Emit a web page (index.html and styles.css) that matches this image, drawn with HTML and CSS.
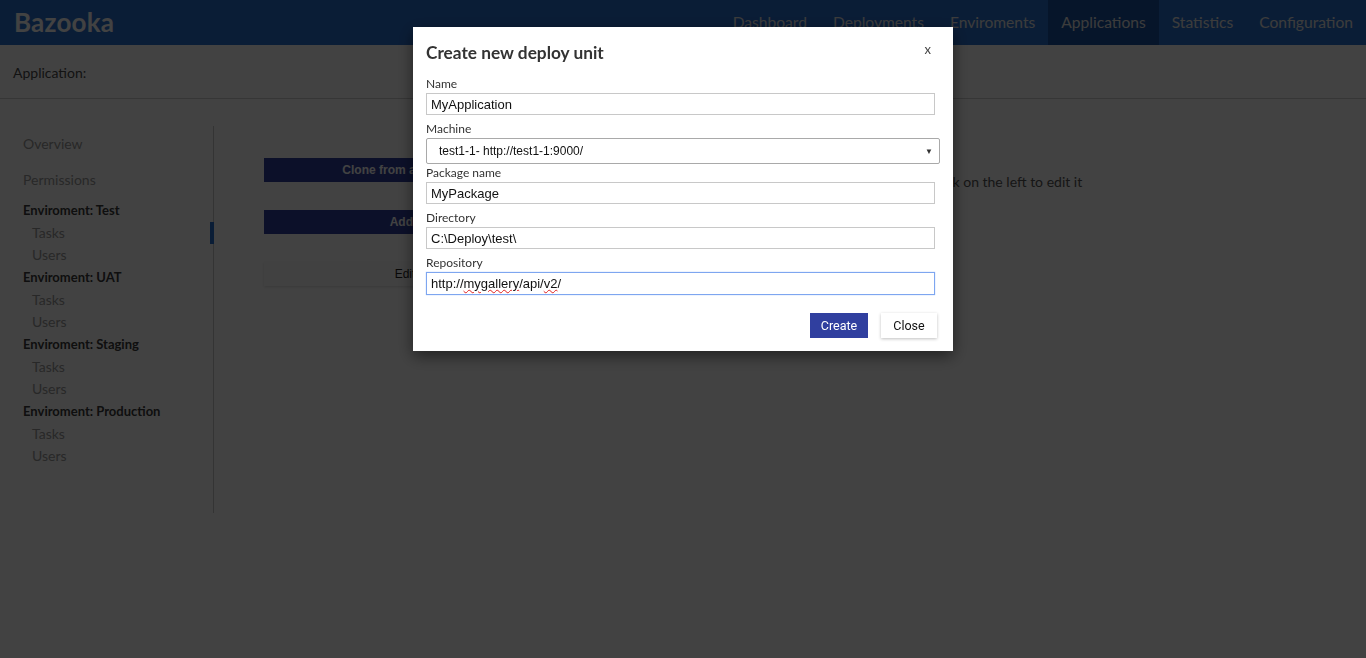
FILE: index.html
```html
<!DOCTYPE html>
<html>
<head>
<meta charset="utf-8">
<title>Bazooka</title>
<link rel="stylesheet" href="styles.css">
</head>
<body>
<header class="topbar">
  <div class="logo">Bazooka</div>
  <nav class="nav">
    <a class="nav-item">Dashboard</a>
    <a class="nav-item">Deployments</a>
    <a class="nav-item">Enviroments</a>
    <a class="nav-item active">Applications</a>
    <a class="nav-item">Statistics</a>
    <a class="nav-item">Configuration</a>
  </nav>
</header>
<div class="subbar">Application:</div>
<main class="page">
  <aside class="sidebar">
    <div class="side-link">Overview</div>
    <div class="side-link">Permissions</div>
    <div class="env">
      <div class="env-title">Enviroment: Test</div>
      <div class="env-link current">Tasks</div>
      <div class="env-link">Users</div>
    </div>
    <div class="env">
      <div class="env-title">Enviroment: UAT</div>
      <div class="env-link">Tasks</div>
      <div class="env-link">Users</div>
    </div>
    <div class="env">
      <div class="env-title">Enviroment: Staging</div>
      <div class="env-link">Tasks</div>
      <div class="env-link">Users</div>
    </div>
    <div class="env">
      <div class="env-title">Enviroment: Production</div>
      <div class="env-link">Tasks</div>
      <div class="env-link">Users</div>
    </div>
  </aside>
  <section class="content">
    <div class="actions">
      <button class="btn-primary wide clone">Clone from another application</button>
      <button class="btn-primary wide add">Add deploy unit</button>
      <button class="btn-plain wide edit">Edit</button>
    </div>
    <p class="hint">Select a task on the left to edit it</p>
  </section>
</main>

<div class="backdrop"></div>
<div class="modal">
  <div class="modal-head">
    <h2 class="modal-title">Create new deploy unit</h2>
    <span class="modal-close">x</span>
  </div>
  <div class="field">
    <label class="label">Name</label>
    <input class="input" value="MyApplication">
  </div>
  <div class="field">
    <label class="label">Machine</label>
    <div class="select">
      <span class="select-text">test1-1- http://test1-1:9000/</span>
      <span class="select-arrow">▼</span>
    </div>
  </div>
  <div class="field">
    <label class="label">Package name</label>
    <input class="input" value="MyPackage">
  </div>
  <div class="field">
    <label class="label">Directory</label>
    <input class="input" value="C:\Deploy\test\">
  </div>
  <div class="field">
    <label class="label">Repository</label>
    <div class="input focused">http://<span class="typo">mygallery</span>/api/<span class="typo">v2</span>/</div>
  </div>
  <div class="modal-foot">
    <button class="btn-create">Create</button>
    <button class="btn-close">Close</button>
  </div>
</div>
</body>
</html>
```
FILE: styles.css
```css
* { box-sizing: border-box; }
html, body { margin: 0; padding: 0; }
body {
  background: #ffffff;
  font-family: Lato, "Open Sans", sans-serif;
  color: #333;
  height: 658px;
  overflow: hidden;
}
.topbar {
  height: 45px;
  background: #2a70d0;
  display: flex;
  align-items: stretch;
  justify-content: space-between;
}
.logo {
  color: #ffffff;
  font-size: 26px;
  font-weight: 700;
  padding-left: 14px;
  line-height: 45px;
  letter-spacing: 0.2px;
}
.nav { display: flex; align-items: stretch; }
.nav-item {
  display: flex;
  align-items: center;
  padding: 0 13px 1px;
  color: #e6e6e6;
  font-size: 15.6px;
}
.nav-item.active { background: #1751a2; }
.subbar {
  height: 54px;
  border-bottom: 1px solid #cfcfcf;
  padding: 0 13px;
  display: flex;
  align-items: center;
  font-size: 14px;
  color: #4a4a4a;
  padding-top: 2px;
}
.page {
  display: flex;
  padding-top: 27px;
}
.sidebar {
  width: 214px;
  height: 387px;
  border-right: 1px solid #c8c8c8;
  padding: 8px 0 0 23px;
}
.side-link {
  font-size: 14px;
  color: #9a9a9a;
  line-height: 20px;
  margin-bottom: 16px;
}
.side-link + .side-link { margin-bottom: 10px; }
.env { margin-bottom: 2px; }
.env-title {
  font-size: 13px;
  font-weight: 700;
  color: #3a3a3a;
  line-height: 20px;
  margin-bottom: 3px;
}
.env-link {
  font-size: 14px;
  color: #9a9a9a;
  line-height: 20px;
  padding-left: 9px;
  margin-bottom: 2px;
  position: relative;
}
.env-link.current::after {
  content: "";
  position: absolute;
  right: -1px;
  top: -1px;
  width: 4px;
  height: 22px;
  background: #2a70d0;
}
.content {
  flex: 1;
  display: flex;
  align-items: flex-start;
  padding: 32px 0 0 50px;
}
.actions {
  width: 300px;
  display: flex;
  flex-direction: column;
  gap: 28px;
}
.wide {
  height: 24px;
  border: none;
  font-family: "Liberation Sans", Arial, sans-serif;
  font-size: 12px;
  padding: 0;
}
.clone { width: 334px; }
.add { width: 342px; }
.edit { width: 282px; }
.btn-primary {
  background: #303f9f;
  color: #ffffff;
  font-weight: 700;
}
.btn-plain {
  background: #fafafa;
  color: #222;
  box-shadow: 0 1px 3px rgba(0,0,0,0.15);
}
.hint {
  margin: 14px 0 0 319px;
  font-size: 14px;
  line-height: 19px;
  color: #555;
}
.backdrop {
  position: fixed;
  inset: 0;
  background: rgba(0, 0, 0, 0.74);
}
.modal {
  position: fixed;
  top: 27px;
  left: 413px;
  width: 540px;
  background: #ffffff;
  padding: 0 16px 13px 13px;
  box-shadow: 0 5px 15px rgba(0,0,0,0.5);
}
.modal-head {
  display: flex;
  justify-content: space-between;
  align-items: flex-start;
  height: 48px;
}
.modal-title {
  margin: 14px 0 0;
  font-size: 17.3px;
  font-weight: 700;
  color: #333;
  line-height: 24px;
}
.modal-close {
  margin: 14px 6px 0 0;
  font-size: 13px;
  color: #444;
}
.field {
  display: flex;
  flex-direction: column;
  margin-bottom: 5px;
  width: 509px;
}
.label {
  font-size: 12px;
  color: #333;
  line-height: 16px;
  padding-top: 1px;
  margin-bottom: 1px;
}
.input {
  height: 22px;
  border: 1px solid #c8c8c8;
  padding: 0 4px;
  font-family: "Liberation Sans", Arial, sans-serif;
  font-size: 13px;
  color: #111;
  line-height: 20px;
  width: 509px;
  margin: 0;
  outline: none;
}
.input.focused {
  height: 23px;
  border: 1px solid #7ea6f0;
  box-shadow: 0 0 1px #9bbcf5;
  line-height: 21px;
}
.typo {
  text-decoration-line: underline;
  text-decoration-style: wavy;
  text-decoration-color: #e02020;
  text-decoration-thickness: 1px;
  text-underline-offset: 1px;
}
.select {
  position: relative;
  width: 514px;
  height: 26px;
  border: 1px solid #a9a9a9;
  border-radius: 2px;
  display: flex;
  align-items: center;
  padding-left: 12px;
  font-family: "Liberation Sans", Arial, sans-serif;
  font-size: 12px;
  color: #111;
  margin-bottom: -5px;
}
.select-arrow {
  position: absolute;
  right: 6px;
  top: 8px;
  font-size: 8px;
  color: #333;
}
.modal-foot {
  display: flex;
  justify-content: flex-end;
  gap: 13px;
  margin-top: 18px;
  width: 511px;
}
.btn-create, .btn-close {
  height: 25px;
  border: none;
  font-family: Roboto, "Liberation Sans", sans-serif;
  font-size: 12.5px;
  padding: 0;
}
.btn-create {
  width: 58px;
  background: #303f9f;
  color: #fff;
}
.btn-close {
  width: 56px;
  background: #fff;
  color: #111;
  box-shadow: 0 1px 3px rgba(0,0,0,0.25);
}
```
